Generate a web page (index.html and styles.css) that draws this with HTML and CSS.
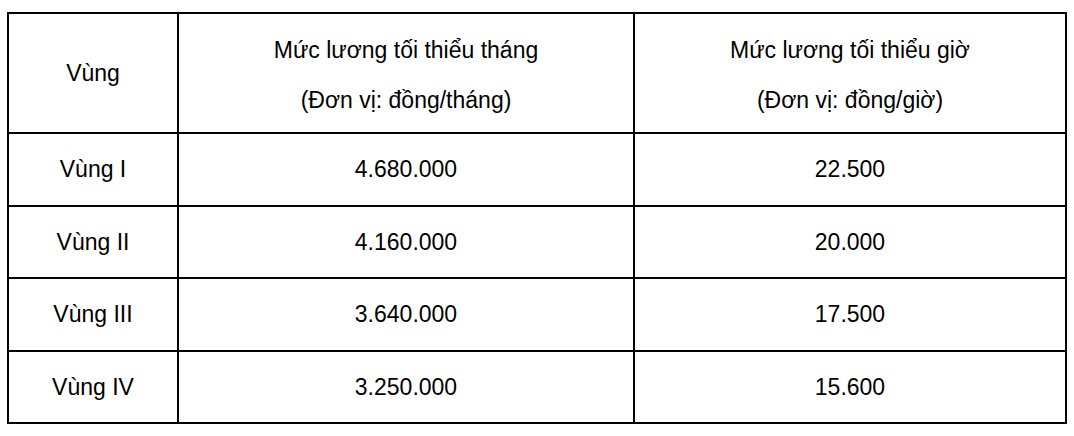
FILE: index.html
```html
<!DOCTYPE html>
<html lang="vi">
<head>
<meta charset="utf-8">
<link rel="stylesheet" href="styles.css">
</head>
<body>
<div class="wrap">
<table class="wage">
  <colgroup>
    <col class="c1">
    <col class="c2">
    <col class="c3">
  </colgroup>
  <thead>
    <tr class="head">
      <th class="single">Vùng</th>
      <th class="multi"><div class="l">Mức lương tối thiểu tháng</div><div class="l">(Đơn vị: đồng/tháng)</div></th>
      <th class="multi"><div class="l">Mức lương tối thiểu giờ</div><div class="l">(Đơn vị: đồng/giờ)</div></th>
    </tr>
  </thead>
  <tbody>
    <tr class="r1"><td>Vùng I</td><td>4.680.000</td><td>22.500</td></tr>
    <tr class="r2"><td>Vùng II</td><td>4.160.000</td><td>20.000</td></tr>
    <tr class="r1"><td>Vùng III</td><td>3.640.000</td><td>17.500</td></tr>
    <tr class="r2"><td>Vùng IV</td><td>3.250.000</td><td>15.600</td></tr>
  </tbody>
</table>
</div>
</body>
</html>
```

FILE: styles.css
```css
html, body {
  margin: 0;
  padding: 0;
  background: #ffffff;
}
.wrap {
  padding: 12px 0 0 7px;
}
.wage {
  border-collapse: separate;
  border-spacing: 0;
  border-top: 2px solid #000;
  border-left: 2px solid #000;
  table-layout: fixed;
  width: 1060px;
  font-family: "Liberation Sans", Arial, sans-serif;
  font-size: 23px;
  color: #000;
}
.c1 { width: 170px; }
.c2 { width: 456px; }
.c3 { width: 432px; }
.wage th, .wage td {
  border-right: 2px solid #000;
  border-bottom: 2px solid #000;
  padding: 0;
  text-align: center;
  vertical-align: middle;
  font-weight: normal;
}
.head th { height: 118px; }
.head th.multi {
  height: 114px;
  padding-top: 4px;
}
.head .l { line-height: 50px; }
.r1 td { height: 71px; }
.r2 td { height: 70px; }
```
